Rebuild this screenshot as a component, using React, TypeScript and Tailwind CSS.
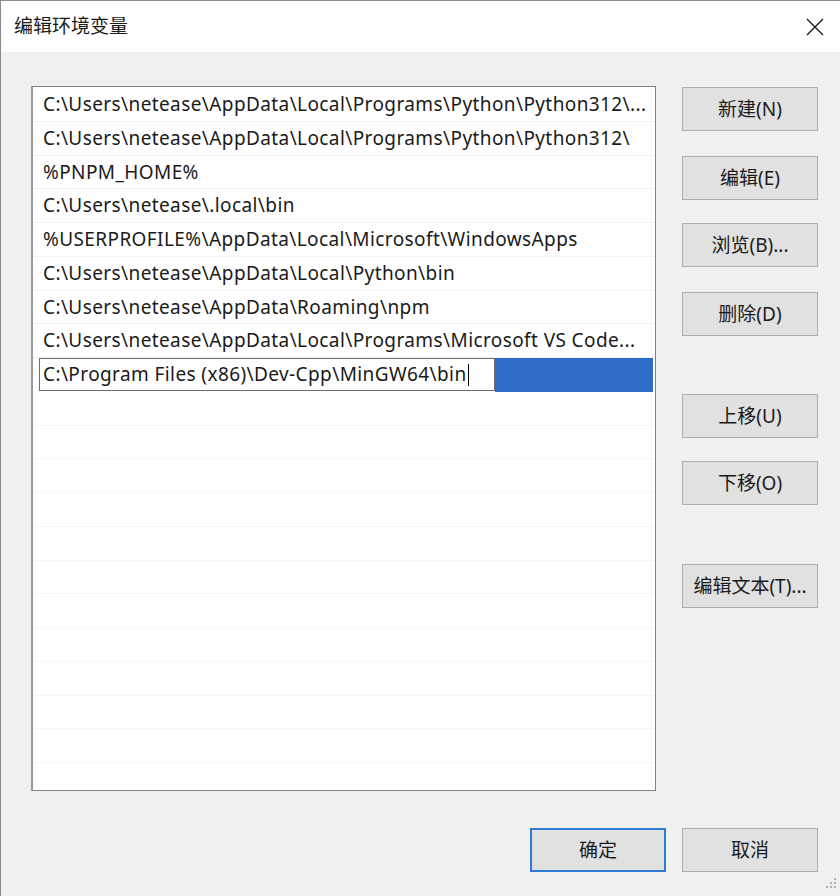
import React from "react";

const paths: string[] = [
  "C:\\Users\\netease\\AppData\\Local\\Programs\\Python\\Python312\\...",
  "C:\\Users\\netease\\AppData\\Local\\Programs\\Python\\Python312\\",
  "%PNPM_HOME%",
  "C:\\Users\\netease\\.local\\bin",
  "%USERPROFILE%\\AppData\\Local\\Microsoft\\WindowsApps",
  "C:\\Users\\netease\\AppData\\Local\\Python\\bin",
  "C:\\Users\\netease\\AppData\\Roaming\\npm",
  "C:\\Users\\netease\\AppData\\Local\\Programs\\Microsoft VS Code...",
];

const editing = "C:\\Program Files (x86)\\Dev-Cpp\\MinGW64\\bin";

const font = { fontFamily: '"Noto Sans", "Noto Sans CJK SC", sans-serif' };

const WinButton: React.FC<{ label: string; className?: string; primary?: boolean }> = ({
  label,
  className = "",
  primary = false,
}) => (
  <button
    className={`w-[136px] h-[44px] flex items-center justify-center bg-[#e1e1e1] text-[19px] text-[#1a1a1a] ${
      primary ? "border-2 border-[#2f7bd6]" : "border border-[#adadad]"
    } ${className}`}
  >
    {label}
  </button>
);

export default function App() {
  const emptyRows = Array.from({ length: 12 });

  return (
    <div
      className="w-[840px] h-[896px] flex flex-col bg-[#f0f0f0] border-t border-l border-[#8a8a8a] overflow-hidden"
      style={font}
    >
      {/* title bar */}
      <div className="h-[51px] shrink-0 bg-white flex items-center justify-between pl-[13px] pr-[12px]">
        <span className="text-[19px] text-[#1a1a1a]">编辑环境变量</span>
        <svg width="20" height="20" viewBox="0 0 20 20" className="mr-[3px]">
          <path d="M2 2L18 18M18 2L2 18" stroke="#1a1a1a" strokeWidth="1.4" fill="none" />
        </svg>
      </div>

      {/* body */}
      <div className="flex-1 flex flex-col pl-[30px] pr-[22px] pt-[34px]">
        <div className="flex gap-[26px]">
          {/* path list */}
          <div className="w-[625px] h-[705px] bg-white border border-[#828282] border-l-2 border-l-[#9a9a9a] pt-[1px] pr-[1px] overflow-hidden">
            {paths.map((p) => (
              <div
                key={p}
                className="h-[33.75px] flex items-center pl-[10px] border-b border-[#f2f2f2] text-[19px] tracking-[0.4px] text-[#1a1a1a] whitespace-nowrap"
              >
                {p}
              </div>
            ))}
            {/* row being edited in place */}
            <div className="h-[33.75px] flex items-stretch pl-[6px] pr-[1px]">
              <div className="w-[456px] h-[33px] bg-white border border-[#6e6e6e] flex items-center pl-[3px] text-[19px] tracking-[0.4px] text-[#1a1a1a] whitespace-nowrap">
                {editing}
                <span className="inline-block w-[1px] h-[22px] bg-black ml-[1px]" />
              </div>
              <div className="flex-1 bg-[#2d6cc9]" />
            </div>
            {emptyRows.map((_, i) => (
              <div key={i} className="h-[33.75px] border-b border-[#f6f6f6]" />
            ))}
          </div>

          {/* action buttons */}
          <div className="flex flex-col pt-[1px]">
            <WinButton label="新建(N)" />
            <WinButton label="编辑(E)" className="mt-[25px]" />
            <WinButton label="浏览(B)..." className="mt-[23px]" />
            <WinButton label="删除(D)" className="mt-[25px]" />
            <WinButton label="上移(U)" className="mt-[58px]" />
            <WinButton label="下移(O)" className="mt-[23px]" />
            <WinButton label="编辑文本(T)..." className="mt-[59px]" />
          </div>
        </div>

        {/* dialog footer */}
        <div className="flex justify-end gap-[16px] mt-[37px]">
          <WinButton label="确定" primary />
          <WinButton label="取消" />
        </div>

        {/* resize grip */}
        <div className="flex justify-end mt-[6px] mr-[-18px]">
          <div className="grid grid-cols-3 gap-[2px]">
            <span />
            <span />
            <span className="w-[2px] h-[2px] bg-[#b0b0b0]" />
            <span />
            <span className="w-[2px] h-[2px] bg-[#b0b0b0]" />
            <span className="w-[2px] h-[2px] bg-[#b0b0b0]" />
            <span className="w-[2px] h-[2px] bg-[#b0b0b0]" />
            <span className="w-[2px] h-[2px] bg-[#b0b0b0]" />
            <span className="w-[2px] h-[2px] bg-[#b0b0b0]" />
          </div>
        </div>
      </div>
    </div>
  );
}
